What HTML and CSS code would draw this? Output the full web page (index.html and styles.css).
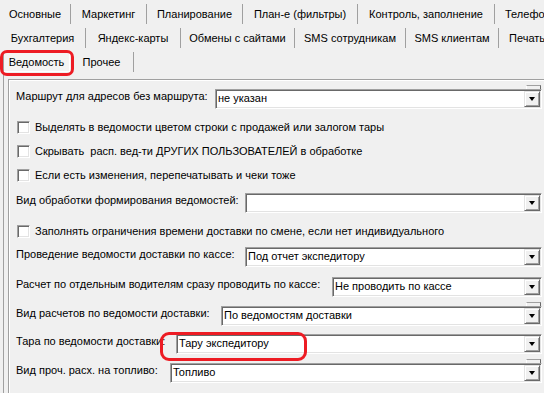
FILE: index.html
```html
<!DOCTYPE html>
<html lang="ru">
<head>
<meta charset="utf-8">
<title>Ведомость</title>
<link rel="stylesheet" href="styles.css">
</head>
<body>
<div class="window">
  <div class="tabs">
    <div class="tabrow row1">
      <div class="tab">Основные</div>
      <div class="tab">Маркетинг</div>
      <div class="tab">Планирование</div>
      <div class="tab">План-е (фильтры)</div>
      <div class="tab">Контроль, заполнение</div>
      <div class="tab tab-last">Телефоны</div>
    </div>
    <div class="tabrow row2">
      <div class="tab">Бухгалтерия</div>
      <div class="tab">Яндекс-карты</div>
      <div class="tab">Обмены с сайтами</div>
      <div class="tab">SMS сотрудникам</div>
      <div class="tab">SMS клиентам</div>
      <div class="tab tab-last">Печать</div>
    </div>
    <div class="tabrow row3">
      <div class="tab tab-active">Ведомость</div>
      <div class="tab">Прочее</div>
    </div>
  </div>

  <div class="page">
    <div class="scrollbox">
      <div class="form">
        <div class="field">
          <span class="lbl lbl-a">Маршрут для адресов без маршрута:</span>
          <div class="combo ghost"><span class="combo-text">не указан</span><span class="combo-btn"><span class="arrow"></span></span></div>
        </div>
        <div class="check"><span class="box"></span><span class="check-text">Выделять в ведомости цветом строки с продажей или залогом тары</span></div>
        <div class="check"><span class="box"></span><span class="check-text">Скрывать&nbsp; расп. вед-ти ДРУГИХ ПОЛЬЗОВАТЕЛЕЙ в обработке</span></div>
        <div class="check"><span class="box"></span><span class="check-text">Если есть изменения, перепечатывать и чеки тоже</span></div>
        <div class="field">
          <span class="lbl lbl-b">Вид обработки формирования ведомостей:</span>
          <div class="combo"><span class="combo-text"></span><span class="combo-btn"><span class="arrow"></span></span></div>
        </div>
        <div class="check"><span class="box"></span><span class="check-text">Заполнять ограничения времени доставки по смене, если нет индивидуального</span></div>
        <div class="field">
          <span class="lbl lbl-c">Проведение ведомости доставки по кассе:</span>
          <div class="combo"><span class="combo-text">Под отчет экспедитору</span><span class="combo-btn"><span class="arrow"></span></span></div>
        </div>
        <div class="field">
          <span class="lbl lbl-d">Расчет по отдельным водителям сразу проводить по кассе:</span>
          <div class="combo"><span class="combo-text">Не проводить по кассе</span><span class="combo-btn"><span class="arrow"></span></span></div>
        </div>
        <div class="field">
          <span class="lbl lbl-e">Вид расчетов по ведомости доставки:</span>
          <div class="combo ghost"><span class="combo-text">По ведомостям доставки</span><span class="combo-btn"><span class="arrow"></span></span></div>
        </div>
        <div class="field">
          <span class="lbl lbl-f">Тара по ведомости доставки:</span>
          <div class="combo"><span class="combo-text">Тару экспедитору</span><span class="combo-btn"><span class="arrow"></span></span></div>
        </div>
        <div class="field">
          <span class="lbl lbl-g">Вид проч. расх. на топливо:</span>
          <div class="combo ghost"><span class="combo-text">Топливо</span><span class="combo-btn"><span class="arrow"></span></span></div>
        </div>
      </div>
    </div>
  </div>

  <div class="mark mark-tab"></div>
  <div class="mark mark-tara"></div>
</div>
</body>
</html>
```

FILE: styles.css
```css
* { box-sizing: border-box; }

body {
  margin: 0;
  background: #f0f0f0;
  font-family: "Liberation Sans", Arial, sans-serif;
  font-size: 11px;
  color: #000;
}

.window {
  position: relative;
  width: 544px;
  height: 393px;
  overflow: hidden;
}

/* ---------- tabs ---------- */
.tabs {
  padding-top: 2px;
}

.tabrow {
  display: grid;
  height: 24px;
}

.row1 { grid-template-columns: 71px 76px 96px 115px 137px 120px; }
.row2 { grid-template-columns: 86px 95px 114px 111px 93px 120px; }
.row3 { grid-template-columns: 67px 64px; padding-left: 3px; }

.tab {
  margin: 2px 0;
  border-right: 1px solid #a0a0a0;
  display: flex;
  align-items: center;
  justify-content: center;
  white-space: nowrap;
  overflow: hidden;
}

.tab-last {
  justify-content: flex-start;
  padding-left: 10px;
  border-right: none;
}

.tab-active {
  border: 1px solid;
  border-color: #a0a0a0 #fff #fff #a0a0a0;
  background: #f4f4f4;
}

/* ---------- page ---------- */
.page {
  margin-left: 3px;
  border-left: 1px solid #a0a0a0;
  padding: 5px 0 0 4px;
  height: 319px;
}

.scrollbox {
  width: 536px;
  height: 320px;
  border-top: 1px solid #a0a0a0;
  border-left: 1px solid #a0a0a0;
  box-shadow: inset 1px 1px 0 #fff;
  padding: 9px 0 0 7px;
}

.form {
  display: grid;
  grid-template-rows: 30px 24px 24px 26px 30px 24px 30px 29px 28px 29px 20px;
  align-items: start;
}

.field {
  display: flex;
  align-items: flex-start;
  height: 20px;
  padding-right: 2px;
}

.lbl {
  flex: none;
  white-space: nowrap;
  line-height: 14px;
}

.lbl-a { width: 199px; }
.lbl-b { width: 229px; }
.lbl-c { width: 229px; }
.lbl-d { width: 316px; }
.lbl-e { width: 205px; }
.lbl-f { width: 160px; }
.lbl-g { width: 154px; }

.combo {
  position: relative;
  flex: 1;
  height: 20px;
  display: flex;
  align-items: stretch;
  background: #fff;
  border: 1px solid;
  border-color: #a0a0a0 #fff #fff #a0a0a0;
  box-shadow: inset 1px 1px 0 #696969, inset -1px -1px 0 #e3e3e3;
  padding: 1px;
}

.combo-text {
  flex: 1;
  padding-left: 1px;
  line-height: 14px;
  white-space: nowrap;
}

.combo-btn {
  flex: none;
  width: 16px;
  background: #f0f0f0;
  border: 1px solid;
  border-color: #e3e3e3 #696969 #696969 #e3e3e3;
  box-shadow: inset 1px 1px 0 #fff, inset -1px -1px 0 #a0a0a0;
  display: flex;
  align-items: center;
  justify-content: center;
}

.arrow {
  width: 0;
  height: 0;
  border-left: 3.5px solid transparent;
  border-right: 3.5px solid transparent;
  border-top: 4px solid #000;
}

.ghost::before {
  content: "";
  position: absolute;
  right: 0;
  top: -5px;
  width: 13px;
  height: 3px;
  background: #f0f0f0;
  border-top: 1px solid #a0a0a0;
  border-right: 1px solid #696969;
  border-left: 1px solid #fff;
}

.check {
  display: flex;
  align-items: center;
  height: 16px;
  padding-left: 1px;
}

.box {
  flex: none;
  width: 13px;
  height: 13px;
  background: #fff;
  border: 1px solid;
  border-color: #a0a0a0 #fff #fff #a0a0a0;
  box-shadow: inset 1px 1px 0 #696969, inset -1px -1px 0 #e3e3e3;
  margin-right: 5px;
}

.check-text { white-space: nowrap; }

/* ---------- red annotation marks ---------- */
.mark {
  position: absolute;
  border: 3px solid #ed1c24;
  border-radius: 7px;
}

.mark-tab {
  left: 0;
  top: 50px;
  width: 74px;
  height: 26px;
}

.mark-tara {
  left: 160px;
  top: 332px;
  width: 147px;
  height: 29px;
  border-width: 3.5px;
  border-radius: 9px;
}
```
